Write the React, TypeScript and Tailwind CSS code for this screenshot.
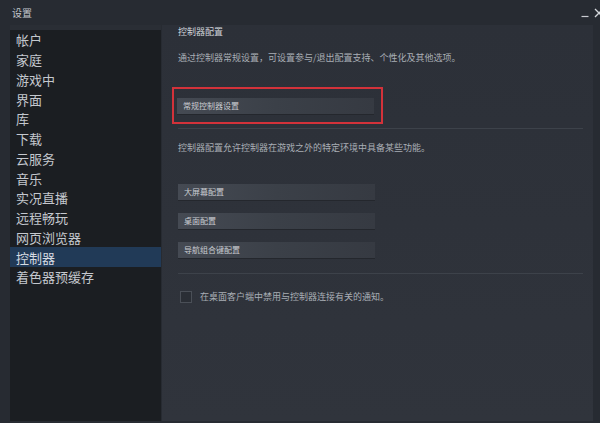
import React from "react";

const navItems = [
  "帐户",
  "家庭",
  "游戏中",
  "界面",
  "库",
  "下载",
  "云服务",
  "音乐",
  "实况直播",
  "远程畅玩",
  "网页浏览器",
  "控制器",
  "着色器预缓存",
];

const font = { fontFamily: '"Noto Sans CJK SC", "Liberation Sans", sans-serif' };

const ConfigButton = ({ label }: { label: string }) => (
  <div className="w-[197px] h-[16px] flex items-center pl-[6px] bg-gradient-to-r from-[#454a53] via-[#3b4048] to-[#363a42] text-[8px] text-[#c9ccd1] shadow-[0_1px_0_#24272d]">
    {label}
  </div>
);

export default function App() {
  return (
    <div className="w-[600px] h-[423px] bg-[#272b32] flex flex-col overflow-hidden" style={font}>
      {/* Title bar */}
      <div className="h-[25px] flex items-center justify-between pl-[12px] shrink-0">
        <span className="text-[10px] text-[#c3c7cd]">设置</span>
        <div className="flex items-center gap-[5px] -mr-[4px] mt-[1px]">
          <svg width="8" height="10" viewBox="0 0 8 10">
            <path d="M0.5 8.5 H7.5" stroke="#c9ccd1" strokeWidth="1.2" />
          </svg>
          <svg width="10" height="10" viewBox="0 0 10 10">
            <path d="M1 1 L9 9 M9 1 L1 9" stroke="#d4d7db" strokeWidth="1.3" />
          </svg>
        </div>
      </div>

      {/* Body */}
      <div className="flex flex-1 pl-[10px] pr-[7px] pb-[2px]">
        {/* Sidebar */}
        <div className="w-[151px] bg-[#1b1e22] border-t-[5px] border-[#2a2e35] flex flex-col">
          {navItems.map((item) => (
            <div
              key={item}
              className={
                "h-[19.75px] flex items-center pl-[6px] text-[13px] leading-none " +
                (item === "控制器" ? "bg-[#213a57] text-[#d6dbe2]" : "text-[#c4c8ce]")
              }
            >
              {item}
            </div>
          ))}
        </div>

        {/* Main */}
        <div className="flex-1 ml-[1px] bg-gradient-to-b from-[#2c3038] to-[#30343c] pl-[16px] pr-[8px] pt-[1px] flex flex-col text-[9px] text-[#a9aeb5]">
          <div className="h-[12px] flex items-center text-[#cfd3d8]">控制器配置</div>
          <div className="mt-[14px] h-[12px] flex items-center">
            通过控制器常规设置，可设置参与/退出配置支持、个性化及其他选项。
          </div>

          <div className="mt-[23px] -ml-[6px] w-[211px] h-[37px] border-2 border-[#d3323a] flex items-center pl-[3px]">
            <ConfigButton label="常规控制器设置" />
          </div>

          <div className="mt-[4px] h-px bg-[#3d424a] mr-[2px]" />

          <div className="mt-[13px] h-[12px] flex items-center">
            控制器配置允许控制器在游戏之外的特定环境中具备某些功能。
          </div>

          <div className="mt-[30px] flex flex-col gap-[13px]">
            <ConfigButton label="大屏幕配置" />
            <ConfigButton label="桌面配置" />
            <ConfigButton label="导航组合键配置" />
          </div>

          <div className="mt-[15px] h-px bg-[#3d424a] mr-[2px]" />

          <div className="mt-[16px] flex items-center gap-[8px] pl-[2px]">
            <div className="w-[12px] h-[12px] border border-[#4a4f57] bg-[#2a2e35]" />
            <span>在桌面客户端中禁用与控制器连接有关的通知。</span>
          </div>
        </div>
      </div>
    </div>
  );
}
